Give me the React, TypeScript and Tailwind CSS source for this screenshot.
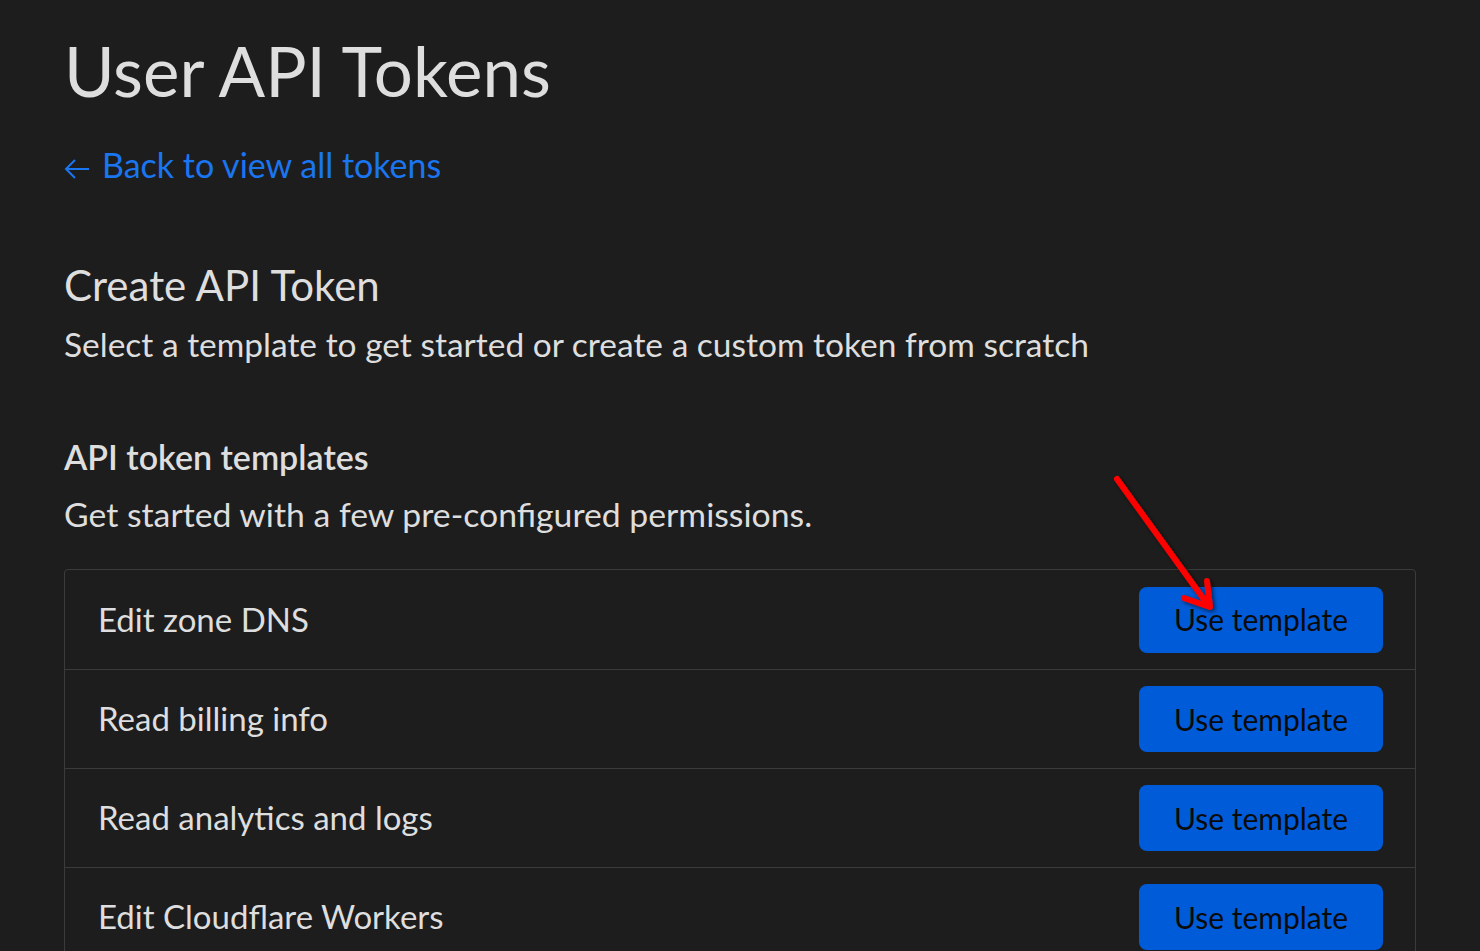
import React from "react";

const templates = [
  "Edit zone DNS",
  "Read billing info",
  "Read analytics and logs",
  "Edit Cloudflare Workers",
];

const RedArrow = () => (
  <svg
    className="absolute left-[1100px] top-[465px] pointer-events-none"
    width="130"
    height="160"
    viewBox="0 0 130 160"
    fill="none"
  >
    <defs>
      <filter id="sh" x="-20%" y="-20%" width="140%" height="140%">
        <feDropShadow dx="2" dy="2" stdDeviation="2" floodColor="#000" floodOpacity="0.6" />
      </filter>
    </defs>
    <g filter="url(#sh)" stroke="#ff0000" strokeWidth="6" strokeLinecap="round" strokeLinejoin="round">
      <path d="M17 14 L108 140" />
      <path d="M84 133 L110 142 L107 116" />
    </g>
  </svg>
);

export default function App() {
  return (
    <div
      className="relative min-h-screen w-full bg-[#1d1d1d] text-[#dedede] px-16 pt-[29px]"
      style={{ fontFamily: "Lato, 'Noto Sans', sans-serif" }}
    >
      <h1 className="text-[69px] leading-[84px] font-normal">User API Tokens</h1>

      <a href="#" className="mt-[32px] flex items-center gap-3 text-[34px] leading-[40px] text-[#1a75f0]">
        <svg width="26" height="22" viewBox="0 0 26 22" className="mt-2" fill="none" stroke="currentColor" strokeWidth="2">
          <path d="M25 11 H2 M11 2 L2 11 L11 20" />
        </svg>
        Back to view all tokens
      </a>

      <h2 className="mt-[74px] text-[42px] leading-[52px]">Create API Token</h2>
      <p className="mt-[13px] text-[33.5px] leading-[40px]">
        Select a template to get started or create a custom token from scratch
      </p>

      <h3 className="mt-[73px] text-[34px] leading-[40px] font-semibold">API token templates</h3>
      <p className="mt-[17px] text-[33.75px] leading-[40px]">
        Get started with a few pre-configured permissions.
      </p>

      <div className="mt-[35px] w-[1352px] rounded-t-[4px] border border-[#3b3b3b]">
        {templates.map((t, i) => (
          <div
            key={t}
            className={`flex h-[99px] items-center justify-between pl-[33px] pr-[32px] ${
              i > 0 ? "border-t border-[#3b3b3b]" : ""
            }`}
          >
            <span className="text-[33px]">{t}</span>
            <button className="h-[66px] w-[244px] rounded-[8px] bg-[#005bd9] text-[30px] text-[#0a0a0a]">
              Use template
            </button>
          </div>
        ))}
      </div>

      <RedArrow />
    </div>
  );
}
